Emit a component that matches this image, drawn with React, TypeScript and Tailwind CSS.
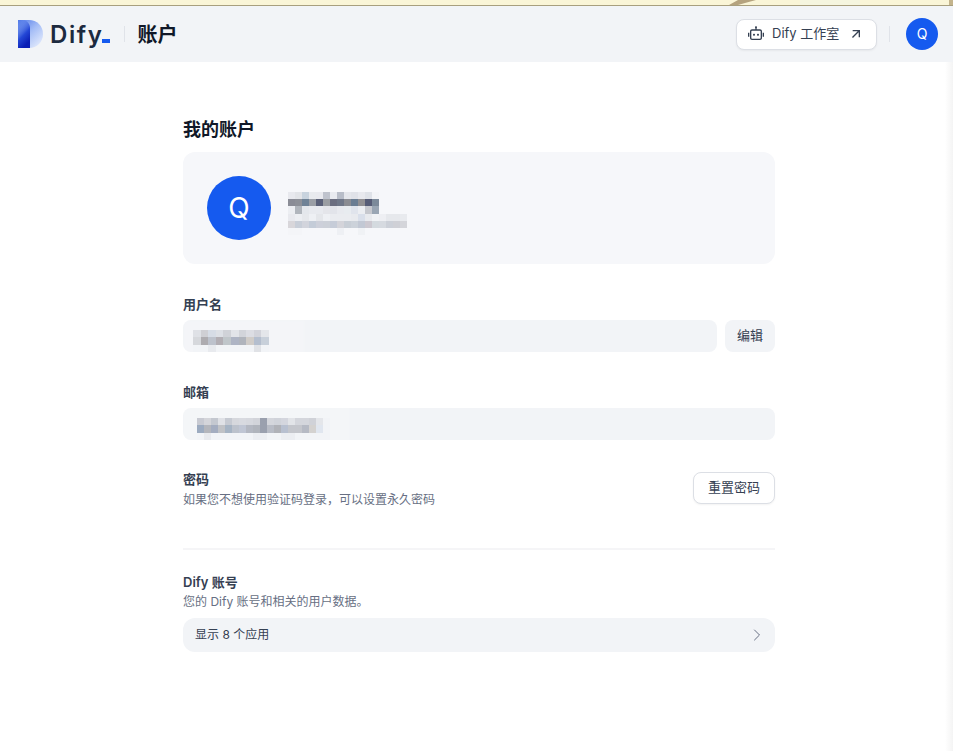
import React from "react";
import { RiRobot2Line, RiArrowRightUpLine } from "react-icons/ri";
import { ChevronRight } from "lucide-react";

const FONT = "font-['Inter','Noto_Sans_CJK_SC',sans-serif]";

function Mosaic({ rows, bw, bh, cls }: { rows: string[][]; bw: number; bh: number; cls?: string }) {
  const w = Math.max(...rows.map((r) => r.length)) * bw;
  const h = rows.length * bh;
  return (
    <svg width={w} height={h} viewBox={`0 0 ${w} ${h}`} className={cls} shapeRendering="crispEdges">
      {rows.map((r, y) =>
        r.map((c, x) => <rect key={`${x}-${y}`} x={x * bw} y={y * bh} width={bw} height={bh} fill={c} />)
      )}
    </svg>
  );
}

const nameRows = [
  "e8e9ee e2e4e8 c8d3de e8eaee e8e9ee bfc3cd e8eaef b8bdc8 e4e6eb e0e2e8 e8e9ee dfe2e8 f3f4f7",
  "8a8c96 8d9098 6f8296 9a9ea5 5a6078 9a9da2 6b6e80 6f7788 8a8c92 6a7d92 908f92 565c76 7c8a9a",
  "eceef2 b0b5bc e4e7ec e8eaef e8eaef e4e5ea e2e4ea e8eaef e8ecf0 e0e4ec eceef2 c6c8ce 9aa6b4",
  "e8e9ee eceef2 e6e8ec eef0f4 e4e6ea eef0f4 eaecf0 eaecf0 eaecf0 e8eaee d9dfea e8eaee f0f2f5 eeeff3 e6e8ec e6e8ec e8eaee",
  "d8d6da c8ced8 d2d4dc c4ccd8 cdd0da ccd0d8 c6ccd8 d4d4da c8ced6 ccd2da c2c8d4 ccc8d0 d4dadf d6dae0 ccd0d8 cfd0d6 d4d5da",
  "f4f5f8 f4f5f8 f6f7fa f6f7fa f6f7fa f6f7fa f6f7fa eef0f4 f6f7fa f6f7fa f0f2f5 f6f7fa f6f7fa f6f7fa f6f7fa f6f7fa f6f7fa",
].map((r) => r.split(" ").map((c) => "#" + c));

const userRows = [
  "dfe1e6 cfcfd4 d6dce6 dde0e6 d0d2d8 e2e4e9 d2d4da dcdde3 d2d3da e4e6ea",
  "d6d8dc aeacb0 bdc2cc b2aeb4 c0c6ca aeb4c4 b0b4bc d0ccc8 b4bece c8d0da",
  "f2f4f7 f2f4f7 e8eaee f2f4f7 f2f4f7 f2f4f7 f2f4f7 f2f4f7 e0e2e6 f2f4f7",
].map((r) => r.split(" ").map((c) => "#" + c));

const mailRows = [
  "c8cad2 d4d5da c4c8d0 dfe1e6 c6cad2 d6d8dd d8dae0 d6d8de d2d4da 9aa0ae d4d6dc d0d3da d4d6de e2e4e8 d4d6dc d4d6dc d0d2d8 e4e6ea f2f4f7",
  "9cabc0 b4b6bc a4adc0 c0c2c6 a6b4c4 bcc2cc c0c6d4 b4b8c2 b0b4bc 9aa0ae b8bcc6 b0b2b8 b8c0d0 c4c6cc c4c6cc b6bac4 d4d2d0 e0e6ef f2f4f7",
  "f2f4f7 e8eaee f2f4f7 f2f4f7 f2f4f7 f2f4f7 f2f4f7 f2f4f7 eceef2 eceef2 f2f4f7 f2f4f7 eceef2 eceef2 f2f4f7 f2f4f7 f2f4f7 f2f4f7 f2f4f7",
].map((r) => r.split(" ").map((c) => "#" + c));

function Logo() {
  return (
    <svg width="26" height="28" viewBox="0 0 26 28" className="shrink-0">
      <defs>
        <linearGradient id="lgA" x1="0" y1="0" x2="0.85" y2="1">
          <stop offset="0" stopColor="#4f78e8" />
          <stop offset="0.5" stopColor="#a6bef6" />
          <stop offset="1" stopColor="#e6edfd" />
        </linearGradient>
        <linearGradient id="lgB" x1="0" y1="0.1" x2="0.4" y2="1">
          <stop offset="0" stopColor="#4f78e8" stopOpacity="0" />
          <stop offset="0.6" stopColor="#2448d6" />
          <stop offset="1" stopColor="#0a1eb5" />
        </linearGradient>
      </defs>
      <path d="M0 0H11C19 0 25 6 25 14C25 22 19 28 11 28H0Z" fill="url(#lgA)" />
      <path d="M0 0H4C8.500 0 12 3.500 12 8V28H0Z" fill="url(#lgB)" />
    </svg>
  );
}

function StripArt() {
  return (
    <svg width="953" height="5" viewBox="0 0 953 5" className="block">
      <path d="M729 5L738 0H756L745 3L738 5Z" fill="#b5a37f" />
      <rect x="800" y="0" width="60" height="5" fill="#f5f5df" />
      <rect x="949" y="0" width="4" height="5" fill="#c4b48c" />
    </svg>
  );
}

export default function App() {
  return (
    <div className={`relative h-[751px] w-[953px] overflow-hidden bg-white ${FONT}`}>
      <div className="h-[5px] bg-[#faf5d7]">
        <StripArt />
      </div>
      <div className="h-px bg-[#a89f7e]" />
      <header className="flex h-14 items-center bg-[#f2f4f7] pl-[18px] pr-[15px]">
        <Logo />
        <div className="ml-[6px] mt-[2px] flex items-baseline">
          <span className="text-[24px] font-semibold leading-7 tracking-[1.6px] text-[#1c2a3f]">Dify</span>
          <span className="-ml-px -mb-[2px] h-1 w-2 bg-[#155aef]" />
        </div>
        <div className="ml-[14px] h-4 w-px bg-[#e0e3e9]" />
        <div className="ml-[12px] mt-[2px] text-xl font-bold leading-7 text-[#101828]">账户</div>
        <div className="ml-auto flex items-center">
          <button className="flex h-[31px] w-[141px] items-center rounded-lg border border-[#dcdfe5] bg-white pl-[11px] text-[13px] text-[#354052] shadow-xs">
            <RiRobot2Line size={16} className="shrink-0" />
            <span className="ml-2">Dify 工作室</span>
            <RiArrowRightUpLine size={16} className="ml-[9px] shrink-0" />
          </button>
          <div className="ml-[12px] h-4 w-px bg-[#e0e3e9]" />
          <div className="-mt-px ml-4 flex size-8 items-center justify-center rounded-full bg-[#155aef] text-sm text-white">Q</div>
        </div>
      </header>

      <main className="ml-[183px] w-[592px] pt-[54px]">
        <h1 className="h-7 text-lg font-semibold leading-7 text-[#101828]">我的账户</h1>
        <section className="mt-2 flex h-28 items-center rounded-xl bg-[#f6f7fa] pl-6">
          <div className="flex size-16 items-center justify-center rounded-full bg-[#155aef] text-[28px] text-white">Q</div>
          <Mosaic rows={nameRows} bw={7} bh={7.2} cls="ml-[17px] mt-[11px] blur-[0.6px]" />
        </section>

        <div className="mt-[30px] h-5 text-[13px] font-semibold leading-5 text-[#354052]">用户名</div>
        <div className="mt-[6px] flex gap-2">
          <div className="relative h-8 flex-1 rounded-lg bg-[#f2f4f7]">
            <div className="absolute left-0 top-0 h-[37px] w-[122px] bg-white/15 blur-[1px]" />
            <Mosaic rows={userRows} bw={7.6} bh={7.3} cls="absolute left-[10px] top-[10px] blur-[0.6px]" />
          </div>
          <button className="h-8 w-[50px] rounded-lg bg-[#f2f4f7] text-[13px] text-[#354052]">编辑</button>
        </div>

        <div className="mt-[30px] h-5 text-[13px] font-semibold leading-5 text-[#354052]">邮箱</div>
        <div className="relative mt-[6px] h-8 rounded-lg bg-[#f2f4f7]">
          <div className="absolute -top-[3px] left-0 h-[38px] w-[167px] bg-white/20 blur-[1px]" />
          <Mosaic rows={mailRows} bw={7} bh={7.3} cls="absolute left-[14px] top-[10px] blur-[0.6px]" />
        </div>

        <div className="mt-[29px] flex h-[39px] items-start justify-between">
          <div>
            <div className="h-5 text-[13px] font-semibold leading-5 text-[#354052]">密码</div>
            <div className="mt-px h-[19px] text-xs leading-5 text-[#676f83]">如果您不想使用验证码登录，可以设置永久密码</div>
          </div>
          <button className="mt-[3px] h-8 w-[82px] rounded-lg border border-[#dcdfe5] bg-white text-[13px] text-[#354052] shadow-xs">重置密码</button>
        </div>

        <div className="mt-10 h-[2px] bg-[#f5f5f7]" />

        <div className="mt-[22px] h-5 text-[13px] font-semibold leading-5 text-[#354052]">Dify 账号</div>
        <div className="mt-px h-[18px] text-xs leading-[18px] text-[#676f83]">您的 Dify 账号和相关的用户数据。</div>
        <div className="mt-[7px] flex h-[34px] items-center justify-between rounded-xl bg-[#f2f4f7] pl-3 pr-2">
          <span className="text-xs text-[#354052]">显示 8 个应用</span>
          <ChevronRight size={20} strokeWidth={1.2} className="text-[#676f83]" />
        </div>
      </main>

      <div className="absolute bottom-0 right-0 top-[62px] w-2 bg-gradient-to-r from-white to-[#f4f4f4]" />
    </div>
  );
}
